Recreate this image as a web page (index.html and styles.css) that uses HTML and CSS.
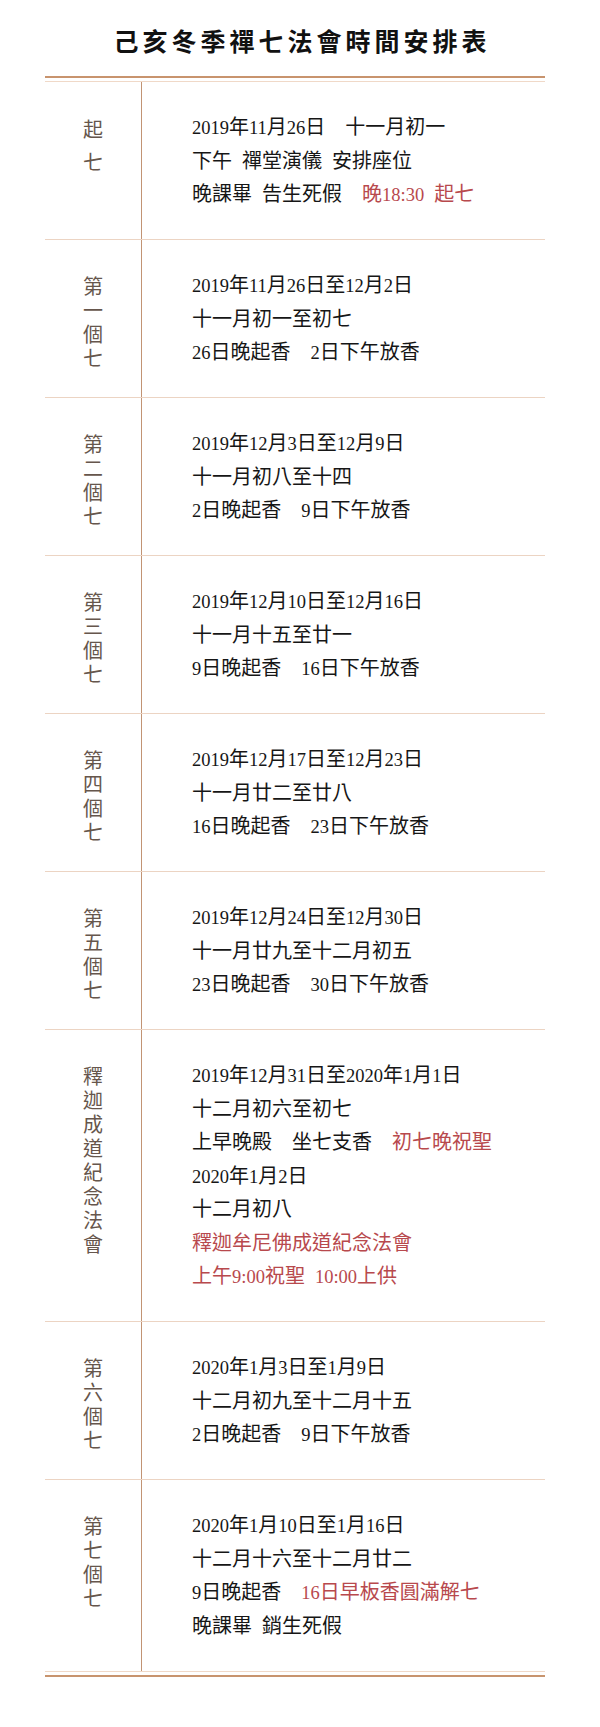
FILE: index.html
```html
<!DOCTYPE html>
<html lang="zh-Hant">
<head>
<meta charset="utf-8">
<title>己亥冬季禪七法會時間安排表</title>
<link rel="stylesheet" href="styles.css">
</head>
<body>
<header class="title"><h1>己亥冬季禪七法會時間安排表</h1></header>
<section class="table">
  <div class="rows">
    <div class="row">
      <div class="label label-wide"><span>起七</span></div>
      <div class="content">
        <p><b class="n">2019</b>年<b class="n">11</b>月<b class="n">26</b>日　十一月初一</p>
        <p>下午&ensp;禪堂演儀&ensp;安排座位</p>
        <p>晚課畢&ensp;告生死假　<span class="red">晚<b class="n">18:30</b>&ensp;起七</span></p>
      </div>
    </div>
    <div class="row">
      <div class="label"><span>第一個七</span></div>
      <div class="content">
        <p><b class="n">2019</b>年<b class="n">11</b>月<b class="n">26</b>日至<b class="n">12</b>月<b class="n">2</b>日</p>
        <p>十一月初一至初七</p>
        <p><b class="n">26</b>日晚起香　<b class="n">2</b>日下午放香</p>
      </div>
    </div>
    <div class="row">
      <div class="label"><span>第二個七</span></div>
      <div class="content">
        <p><b class="n">2019</b>年<b class="n">12</b>月<b class="n">3</b>日至<b class="n">12</b>月<b class="n">9</b>日</p>
        <p>十一月初八至十四</p>
        <p><b class="n">2</b>日晚起香　<b class="n">9</b>日下午放香</p>
      </div>
    </div>
    <div class="row">
      <div class="label"><span>第三個七</span></div>
      <div class="content">
        <p><b class="n">2019</b>年<b class="n">12</b>月<b class="n">10</b>日至<b class="n">12</b>月<b class="n">16</b>日</p>
        <p>十一月十五至廿一</p>
        <p><b class="n">9</b>日晚起香　<b class="n">16</b>日下午放香</p>
      </div>
    </div>
    <div class="row">
      <div class="label"><span>第四個七</span></div>
      <div class="content">
        <p><b class="n">2019</b>年<b class="n">12</b>月<b class="n">17</b>日至<b class="n">12</b>月<b class="n">23</b>日</p>
        <p>十一月廿二至廿八</p>
        <p><b class="n">16</b>日晚起香　<b class="n">23</b>日下午放香</p>
      </div>
    </div>
    <div class="row">
      <div class="label"><span>第五個七</span></div>
      <div class="content">
        <p><b class="n">2019</b>年<b class="n">12</b>月<b class="n">24</b>日至<b class="n">12</b>月<b class="n">30</b>日</p>
        <p>十一月廿九至十二月初五</p>
        <p><b class="n">23</b>日晚起香　<b class="n">30</b>日下午放香</p>
      </div>
    </div>
    <div class="row">
      <div class="label"><span>釋迦成道紀念法會</span></div>
      <div class="content">
        <p><b class="n">2019</b>年<b class="n">12</b>月<b class="n">31</b>日至<b class="n">2020</b>年<b class="n">1</b>月<b class="n">1</b>日</p>
        <p>十二月初六至初七</p>
        <p>上早晚殿　坐七支香　<span class="red">初七晚祝聖</span></p>
        <p><b class="n">2020</b>年<b class="n">1</b>月<b class="n">2</b>日</p>
        <p>十二月初八</p>
        <p class="red">釋迦牟尼佛成道紀念法會</p>
        <p class="red">上午<b class="n">9:00</b>祝聖&ensp;<b class="n">10:00</b>上供</p>
      </div>
    </div>
    <div class="row">
      <div class="label"><span>第六個七</span></div>
      <div class="content">
        <p><b class="n">2020</b>年<b class="n">1</b>月<b class="n">3</b>日至<b class="n">1</b>月<b class="n">9</b>日</p>
        <p>十二月初九至十二月十五</p>
        <p><b class="n">2</b>日晚起香　<b class="n">9</b>日下午放香</p>
      </div>
    </div>
    <div class="row">
      <div class="label"><span>第七個七</span></div>
      <div class="content">
        <p><b class="n">2020</b>年<b class="n">1</b>月<b class="n">10</b>日至<b class="n">1</b>月<b class="n">16</b>日</p>
        <p>十二月十六至十二月廿二</p>
        <p><b class="n">9</b>日晚起香　<span class="red"><b class="n">16</b>日早板香圓滿解七</span></p>
        <p>晚課畢&ensp;銷生死假</p>
      </div>
    </div>
  </div>
</section>
</body>
</html>
```
FILE: styles.css
```css
html, body {
  margin: 0;
  padding: 0;
  background: #ffffff;
}

body {
  width: 600px;
  font-family: "Liberation Serif", "Noto Sans CJK TC", serif;
  color: #161616;
}

.title {
  box-sizing: border-box;
  height: 76px;
  padding-top: 5px;
  display: flex;
  align-items: center;
  justify-content: center;
}

.title h1 {
  margin: 0;
  padding-left: 4px;
  font-family: "Noto Sans CJK TC", sans-serif;
  font-size: 25px;
  font-weight: 600;
  line-height: 1;
  letter-spacing: 4px;
  color: #111111;
}

.table {
  width: 500px;
  margin-left: 45px;
  padding: 3px 0;
  border-top: 2px solid #c8946e;
  border-bottom: 2px solid #c8946e;
}

.rows {
  border-top: 1px solid #f0d9c8;
  border-bottom: 1px solid #f0d9c8;
}

.row {
  display: grid;
  grid-template-columns: 97px 1fr;
}

.row + .row {
  border-top: 1px solid #ecd4c3;
}

.label {
  border-right: 1px solid #c29474;
  padding-top: 34px;
  display: flex;
  justify-content: center;
}

.label span {
  width: 20px;
  font-family: "Noto Sans CJK TC", sans-serif;
  font-size: 20px;
  line-height: 24px;
  color: #66564c;
  text-align: center;
}

.label-wide {
  padding-top: 30px;
}

.label-wide span {
  line-height: 33px;
}

.content {
  padding: 29px 0 27.5px 50px;
  font-size: 20px;
  line-height: 33.5px;
}

.content p {
  margin: 0;
  height: 33.5px;
  white-space: nowrap;
}

.n {
  font-weight: normal;
  font-size: 18.5px;
  line-height: 1;
}

.red {
  color: #b8494d;
}
```
